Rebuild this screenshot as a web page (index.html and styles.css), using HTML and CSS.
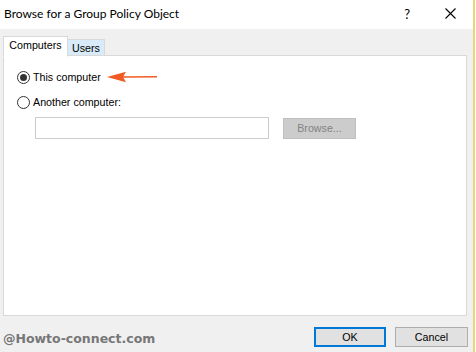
FILE: index.html
```html
<!DOCTYPE html>
<html>
<head>
<meta charset="utf-8">
<link rel="stylesheet" href="styles.css">
</head>
<body>
<div class="window">
  <div class="main">
    <div class="titlebar">
      <span class="title">Browse for a Group Policy Object</span>
      <span class="help">?</span>
      <svg class="close" width="11" height="11" viewBox="0 0 11 11"><path d="M0.5 0.5 L10.5 10.5 M10.5 0.5 L0.5 10.5" stroke="#000" stroke-width="1.1" fill="none"/></svg>
    </div>
    <div class="body">
      <div class="tabs">
        <div class="tab active">Computers</div>
        <div class="tab">Users</div>
      </div>
      <div class="panel">
        <label class="radio-row">
          <span class="radio checked"></span>
          <span class="label">This computer</span>
          <svg class="arrow" width="52" height="12" viewBox="0 0 52 12"><path d="M16 5.2 L50 5.0 L50 6.6 L16 6.8 Z" fill="#f15a24"/><path d="M0 6 L19 0.8 L16 6 L19 11.2 Z" fill="#f15a24"/></svg>
        </label>
        <label class="radio-row">
          <span class="radio"></span>
          <span class="label">Another computer:</span>
        </label>
        <div class="computer-row">
          <div class="input"></div>
          <div class="btn disabled">Browse...</div>
        </div>
      </div>
      <div class="footer">
        <span class="watermark">@Howto-connect.com</span>
        <div class="buttons">
          <div class="btn default">OK</div>
          <div class="btn">Cancel</div>
        </div>
      </div>
    </div>
  </div>
  <div class="edge"></div>
</div>
</body>
</html>
```

FILE: styles.css
```css
html, body {
  margin: 0;
  padding: 0;
  background: #ffffff;
}
body {
  font-family: "Liberation Sans", Arial, sans-serif;
  font-size: 10.7px;
  color: #000;
}
.window {
  width: 476px;
  height: 352px;
  display: flex;
  overflow: hidden;
}
.main {
  width: 473px;
  display: flex;
  flex-direction: column;
}
.edge {
  width: 2px;
  background: #e7d77a;
  margin-right: 1px;
}
.titlebar {
  height: 29px;
  background: #ffffff;
  display: flex;
  align-items: center;
  padding-left: 4px;
  box-sizing: border-box;
}
.title {
  flex: 1;
  font-family: "Lato", "Liberation Sans", sans-serif;
  font-size: 12px;
  margin-top: -2px;
}
.help {
  font-family: "Lato", "Liberation Sans", sans-serif;
  font-size: 13px;
  margin-right: 35px;
  margin-top: -2px;
}
.close {
  margin-right: 17px;
  margin-top: -2px;
}
.body {
  flex: 1;
  background: #f0f0f0;
  display: flex;
  flex-direction: column;
  padding: 7px 6px 0 3px;
}
.tabs {
  display: flex;
  align-items: flex-end;
  height: 20px;
  position: relative;
  z-index: 1;
  margin-bottom: -1px;
}
.tab {
  height: 17px;
  box-sizing: border-box;
  border: 1px solid #d9d9d9;
  background: #d9ebf9;
  padding: 1px 0 0 0;
  width: 37px;
  text-align: center;
  line-height: 15px;
  border-left: none;
}
.tab.active {
  height: 21px;
  margin-bottom: -1px;
  background: #ffffff;
  border-left: 1px solid #d9d9d9;
  border-bottom: 1px solid #ffffff;
  padding: 1px 0 0 0;
  line-height: 15px;
  width: 65px;
}
.panel {
  height: 261px;
  box-sizing: border-box;
  background: #ffffff;
  border: 1px solid #d9d9d9;
  padding: 13px 13px 0 13px;
  display: flex;
  flex-direction: column;
}
.radio-row {
  display: flex;
  align-items: center;
  height: 16px;
  margin-bottom: 9px;
}
.radio {
  width: 13px;
  height: 13px;
  box-sizing: border-box;
  border: 1px solid #333333;
  border-radius: 50%;
  background: #fff;
  display: flex;
  align-items: center;
  justify-content: center;
  margin-right: 3px;
}
.radio.checked::after {
  content: "";
  width: 7px;
  height: 7px;
  border-radius: 50%;
  background: #333333;
}
.arrow {
  margin-left: 6px;
}
.computer-row {
  display: flex;
  align-items: center;
  margin-left: 18px;
  margin-top: -2px;
}
.input {
  width: 234px;
  height: 22px;
  box-sizing: border-box;
  border: 1px solid #cccccc;
  background: #fff;
}
.btn {
  height: 21px;
  box-sizing: border-box;
  border: 1px solid #adadad;
  background: #e1e1e1;
  display: flex;
  align-items: center;
  justify-content: center;
  width: 73px;
}
.btn.disabled {
  margin-left: 14px;
  background: #cccccc;
  border-color: #bfbfbf;
  color: #838383;
}
.footer {
  flex: 1;
  display: flex;
  align-items: flex-start;
  justify-content: space-between;
  padding-top: 11px;
  padding-right: 0;
}
.watermark {
  font-family: "DejaVu Sans", sans-serif;
  font-weight: bold;
  font-size: 12.5px;
  color: #777777;
  margin-top: 4px;
  margin-left: 0;
}
.buttons {
  display: flex;
  gap: 9px;
  margin-right: -1px;
}
.buttons .btn {
  height: 20px;
}
.btn.default {
  border: 2px solid #0078d7;
  width: 72px;
}
```
